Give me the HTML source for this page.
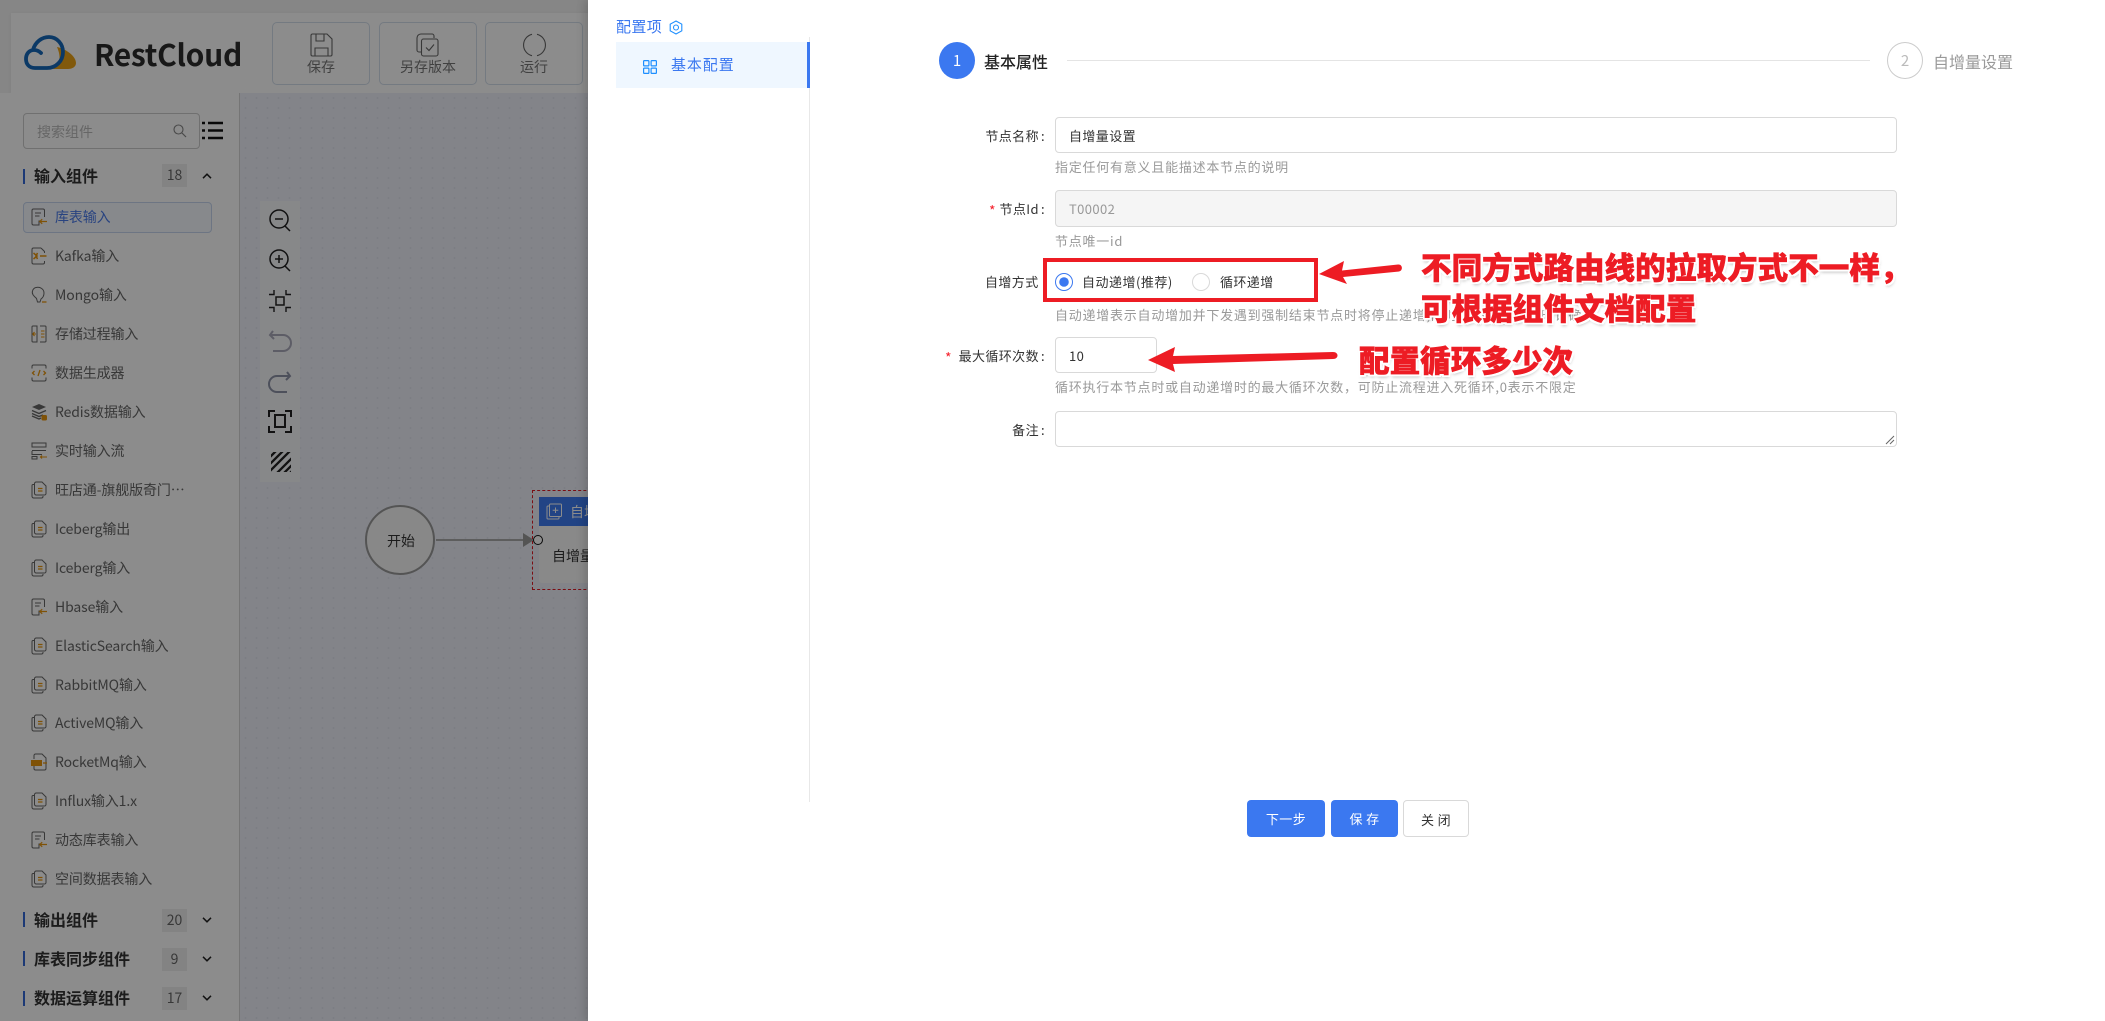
<!DOCTYPE html>
<html lang="zh-CN">
<head>
<meta charset="utf-8">
<title>RestCloud</title>
<style>
html,body{margin:0;padding:0;width:2105px;height:1021px;overflow:hidden;background:#f4f4f4;font-family:"Noto Sans CJK SC","Liberation Sans",sans-serif;}
.a{position:absolute;white-space:nowrap;}
svg{position:absolute;overflow:visible;}
#hdr{left:11px;top:13px;width:640px;height:80px;background:#fff;box-shadow:0 1px 4px rgba(0,0,0,.06);}
.hb{position:absolute;top:22px;height:61px;border:1px solid #d3deec;border-radius:5px;background:#fff;box-sizing:content-box;}
.hbt{position:absolute;left:0;right:0;top:34px;text-align:center;font-size:14px;line-height:20px;color:#777;}
#side{left:0;top:93px;width:239px;height:928px;background:#fff;border-right:1px solid #d5d5d5;}
#canvas{left:240px;top:93px;width:348px;height:928px;background-color:#eef1f9;background-image:radial-gradient(circle,#e2e5ee .8px,transparent 1px);background-size:11px 10px;}
#search{left:23px;top:113px;width:175px;height:34px;border:1px solid #ccc;border-radius:4px;background:#fff;}
.g{position:absolute;left:34px;font-size:16px;line-height:22px;font-weight:700;color:#333;}
.gb{position:absolute;left:23px;width:2px;height:15px;background:#3469d8;}
.bd{position:absolute;left:162px;width:25px;height:23px;background:#efefef;color:#666;font-size:14px;line-height:23px;text-align:center;}
.it{position:absolute;left:55px;font-size:14px;line-height:20px;color:#666;letter-spacing:-.12px;}
#ov{left:0;top:0;width:588px;height:1021px;background:rgba(0,0,0,.45);}
#dr{left:588px;top:0;width:1517px;height:1021px;background:#fff;box-shadow:-4px 0 8px rgba(0,0,0,.14);}
.lb{position:absolute;font-size:13px;line-height:20px;color:#333;letter-spacing:.4px;white-space:nowrap;}
.lr{right:1060px;text-align:right;}
.lr span{margin-left:2px;}
.hp{position:absolute;left:1055px;font-size:13px;line-height:20px;color:#999;letter-spacing:.76px;white-space:nowrap;}
.in{position:absolute;left:1055px;box-sizing:border-box;border:1px solid #d9d9d9;border-radius:4px;background:#fff;font-size:13px;line-height:36px;padding-left:13px;color:#333;letter-spacing:.4px;}
.st{position:absolute;color:#f5222d;font-size:14px;line-height:20px;}
.btn{position:absolute;top:800px;height:37px;border-radius:4px;box-sizing:border-box;font-size:13px;line-height:37px;text-align:center;letter-spacing:.4px;}
.red{position:absolute;font-size:30.6px;line-height:40px;font-weight:900;color:#ed1c24;white-space:nowrap;-webkit-text-stroke:.6px #ed1c24;text-shadow:2px 0 0 #fff,-2px 0 0 #fff,0 2px 0 #fff,0 -2px 0 #fff,2px 2px 0 #fff,-2px 2px 0 #fff,2px -2px 0 #fff,-2px -2px 0 #fff,1px 3px 3px rgba(0,0,0,.25);}
</style>
</head>
<body>
<svg width="0" height="0" style="position:absolute">
<defs>
<symbol id="doc" viewBox="0 0 16 18"><path d="M3.500 3.500H2.200A1.200 1.200 0 0 0 1 4.700V15.300A1.700 1.700 0 0 0 2.700 17H10.500A1.500 1.500 0 0 0 12 15.500V15" fill="none" stroke="#666" stroke-width="1"/><path d="M5.200 1H11L15 5V12.500A1.500 1.500 0 0 1 13.500 14H5.200A1.700 1.700 0 0 1 3.500 12.300V2.700A1.700 1.700 0 0 1 5.200 1Z" fill="none" stroke="#666" stroke-width="1"/><path d="M7 7.500H11.500M7 10H11.500" stroke="#e8950d" stroke-width="1.200"/></symbol>
<symbol id="tin" viewBox="0 0 16 18"><path d="M10 13H8V17H2.500A1.500 1.500 0 0 1 1 15.500V2.500A1.500 1.500 0 0 1 2.500 1H12A1.500 1.500 0 0 1 13.500 2.500V9" fill="none" stroke="#666" stroke-width="1"/><path d="M4 5H10M4 8H8.500" stroke="#666" stroke-width="1"/><path d="M16 13.500H9M11.200 11.200L8.800 13.500L11.200 15.800" fill="none" stroke="#e8950d" stroke-width="1.200"/></symbol>
<clipPath id="hc"><rect x="0" y="0" width="20" height="20"/></clipPath>
</defs>
</svg>

<!-- header -->
<div class="a" id="hdr"></div>
<svg style="left:24px;top:34px" width="54" height="38" viewBox="0 0 54 38">
<path d="M33 13C42 15 52 22 52 29C52 33 48 35 44 35H29C38 29 36 20 33 13Z" fill="#eca216"/>
<path d="M9 16C11 8 18 3 25 3C33 3 39 10 39 18C39 27 32 34 23 34H11C5 34 2 30 2 25C2 20 5 16 10 16C13 16 15 17 17 19" fill="none" stroke="#1569bb" stroke-width="3.800" stroke-linecap="round"/>
</svg>
<div class="a" style="left:94px;top:31px;font-size:30px;line-height:44px;font-weight:700;color:#2c2c2c;letter-spacing:-.3px;">RestCloud</div>

<div class="hb" style="left:272px;width:96px;"><svg style="left:37px;top:10px" width="23" height="24" viewBox="0 0 23 24"><path d="M2.500 1H17L22 6V21.500A1.500 1.500 0 0 1 20.500 23H2.500A1.500 1.500 0 0 1 1 21.500V2.500A1.500 1.500 0 0 1 2.500 1Z M6 1V8H14V1 M5 23V15H18V23" fill="none" stroke="#666" stroke-width="1.100"/></svg><div class="hbt">保存</div></div>
<div class="hb" style="left:379px;width:96px;"><svg style="left:36px;top:10px" width="23" height="24" viewBox="0 0 23 24"><path d="M5 1H16A2 2 0 0 1 18 3V5M5 19H3A2 2 0 0 1 1 17V5A4 4 0 0 1 5 1" fill="none" stroke="#666" stroke-width="1.100"/><rect x="5.500" y="6" width="16.500" height="17" rx="2" fill="none" stroke="#666" stroke-width="1.100"/><path d="M10 14.500L13 17.500L18 11.500" fill="none" stroke="#666" stroke-width="1.100"/></svg><div class="hbt">另存版本</div></div>
<div class="hb" style="left:485px;width:96px;"><svg style="left:37px;top:10px" width="23" height="24" viewBox="0 0 23 24"><path d="M9 1.300A11 11 0 0 0 9 22.700M14 1.300A11 11 0 0 1 14 22.700" fill="none" stroke="#666" stroke-width="1.100"/></svg><div class="hbt">运行</div></div>

<!-- sidebar -->
<div class="a" id="side"></div>
<div class="a" id="canvas"></div>
<div class="a" id="search"><div class="a" style="left:13px;top:8px;font-size:14px;line-height:20px;color:#bbb;">搜索组件</div>
<svg style="left:149px;top:10px" width="14" height="14" viewBox="0 0 14 14"><circle cx="5.500" cy="5.500" r="4.500" fill="none" stroke="#888" stroke-width="1.100"/><path d="M9 9L13 13" stroke="#888" stroke-width="1.200"/></svg></div>
<svg style="left:202px;top:121px" width="21" height="19" viewBox="0 0 21 19"><path d="M0 2H3M6 2H21M0 9.500H3M6 9.500H21M0 17H3M6 17H21" stroke="#111" stroke-width="2.400"/></svg>

<div class="gb" style="top:169px"></div><div class="g" style="top:164px">输入组件</div><div class="bd" style="top:164px;height:23px;">18</div>
<svg style="left:202px;top:173px" width="10" height="6" viewBox="0 0 10 6"><path d="M1 5.200L5 1.200L9 5.200" fill="none" stroke="#222" stroke-width="1.500"/></svg>

<div class="a" style="left:23px;top:202px;width:187px;height:29px;border:1px solid #c6d6ee;border-radius:4px;background:#f6f9ff;"></div>
<svg style="left:31px;top:208px" width="16" height="18"><use href="#tin"/></svg><div class="it" style="top:207px;color:#4a7bea;">库表输入</div>
<svg style="left:31px;top:247px" width="16" height="18" viewBox="0 0 16 18"><path d="M10 1H2.500A1.500 1.500 0 0 0 1 2.500V15.500A1.500 1.500 0 0 0 2.500 17H12A1.500 1.500 0 0 0 13.500 15.500V14M10 1L13.500 4.500V6" fill="none" stroke="#666"/><path d="M2.500 6L6 9L2.500 12M6.500 6L5 9L6.500 12M9 9H15.500" fill="none" stroke="#e8950d" stroke-width="1.500"/></svg><div class="it" style="top:246px;">Kafka输入</div>
<svg style="left:31px;top:286px" width="16" height="18" viewBox="0 0 16 18"><path d="M5 1.500C9 .5 13 3 13 7C13 10 11.500 12 10 13L9 16H6.500L5.500 12.500C3 10 .5 8 1.500 5C2 3 3 2 5 1.500Z" fill="none" stroke="#666"/><path d="M11 16H15.500" stroke="#e8950d" stroke-width="1.300"/></svg><div class="it" style="top:285px;">Mongo输入</div>
<svg style="left:31px;top:325px" width="16" height="18" viewBox="0 0 16 18"><path d="M2 1H6V17H2A1 1 0 0 1 1 16V2A1 1 0 0 1 2 1ZM9 1H14A1 1 0 0 1 15 2V16A1 1 0 0 1 14 17H9" fill="none" stroke="#666"/><path d="M2 9H5M3.500 7L1.800 9L3.500 11M10 6H13.500M10 9H13.500M10 12H13.500" fill="none" stroke="#e8950d" stroke-width="1.100"/></svg><div class="it" style="top:324px;">存储过程输入</div>
<svg style="left:31px;top:364px" width="16" height="18" viewBox="0 0 16 18"><path d="M1 4.500V2.500A1.500 1.500 0 0 1 2.500 1H13.500A1.500 1.500 0 0 1 15 2.500V4.500M1 13.500V15.500A1.500 1.500 0 0 0 2.500 17H13.500A1.500 1.500 0 0 0 15 15.500V13.500" fill="none" stroke="#666"/><path d="M3.500 7L1.500 9L3.500 11M12.500 7L14.500 9L12.500 11M9 6L7 12" fill="none" stroke="#e8950d" stroke-width="1.300"/></svg><div class="it" style="top:363px;">数据生成器</div>
<svg style="left:31px;top:403px" width="16" height="18" viewBox="0 0 16 18"><path d="M8 1L15 4L8 7L1 4Z" fill="#666"/><path d="M1 7.500L8 10.500L15 7.500M1 10.500L8 13.500L12 12M1 13L8 16L10 15" fill="none" stroke="#666" stroke-width="1.300"/><rect x="10.500" y="12" width="5.500" height="5.500" rx="1.500" fill="#e8950d"/></svg><div class="it" style="top:402px;">Redis数据输入</div>
<svg style="left:31px;top:442px" width="16" height="18" viewBox="0 0 16 18"><path d="M1 1H15V5H1ZM1 8.500H15M1 9V12.500H11M1 14.500H6V17H1Z" fill="none" stroke="#666"/><path d="M16 15H9.500M11 13.500L9.500 15L11 16.500" fill="none" stroke="#e8950d" stroke-width="1.100"/></svg><div class="it" style="top:441px;">实时输入流</div>
<svg style="left:31px;top:481px" width="16" height="18"><use href="#doc"/></svg><div class="it" style="top:480px;">旺店通-旗舰版奇门…</div>
<svg style="left:31px;top:520px" width="16" height="18"><use href="#doc"/></svg><div class="it" style="top:519px;">Iceberg输出</div>
<svg style="left:31px;top:559px" width="16" height="18"><use href="#doc"/></svg><div class="it" style="top:558px;">Iceberg输入</div>
<svg style="left:31px;top:598px" width="16" height="18"><use href="#tin"/></svg><div class="it" style="top:597px;">Hbase输入</div>
<svg style="left:31px;top:637px" width="16" height="18"><use href="#doc"/></svg><div class="it" style="top:636px;">ElasticSearch输入</div>
<svg style="left:31px;top:676px" width="16" height="18"><use href="#doc"/></svg><div class="it" style="top:675px;">RabbitMQ输入</div>
<svg style="left:31px;top:714px" width="16" height="18"><use href="#doc"/></svg><div class="it" style="top:713px;">ActiveMQ输入</div>
<svg style="left:31px;top:753px" width="16" height="18" viewBox="0 0 16 18"><path d="M3 6V2.500A1.500 1.500 0 0 1 4.500 1H11L15 5V15.500A1.500 1.500 0 0 1 13.500 17H4.500A1.500 1.500 0 0 1 3 15.500V13" fill="none" stroke="#666"/><rect x="0" y="7" width="11" height="6" fill="#e8950d"/><path d="M12 10H16" stroke="#e8950d" stroke-width="1.300"/></svg><div class="it" style="top:752px;">RocketMq输入</div>
<svg style="left:31px;top:792px" width="16" height="18"><use href="#doc"/></svg><div class="it" style="top:791px;">Influx输入1.x</div>
<svg style="left:31px;top:831px" width="16" height="18"><use href="#tin"/></svg><div class="it" style="top:830px;">动态库表输入</div>
<svg style="left:31px;top:870px" width="16" height="18"><use href="#doc"/></svg><div class="it" style="top:869px;">空间数据表输入</div>

<div class="gb" style="top:912px"></div><div class="g" style="top:908px">输出组件</div><div class="bd" style="top:909px">20</div>
<svg style="left:202px;top:917px" width="10" height="6" viewBox="0 0 10 6"><path d="M1 .8L5 4.800L9 .8" fill="none" stroke="#222" stroke-width="1.500"/></svg>
<div class="gb" style="top:951px"></div><div class="g" style="top:947px">库表同步组件</div><div class="bd" style="top:948px">9</div>
<svg style="left:202px;top:956px" width="10" height="6" viewBox="0 0 10 6"><path d="M1 .8L5 4.800L9 .8" fill="none" stroke="#222" stroke-width="1.500"/></svg>
<div class="gb" style="top:991px"></div><div class="g" style="top:986px">数据运算组件</div><div class="bd" style="top:987px">17</div>
<svg style="left:202px;top:995px" width="10" height="6" viewBox="0 0 10 6"><path d="M1 .8L5 4.800L9 .8" fill="none" stroke="#222" stroke-width="1.500"/></svg>

<!-- toolbar -->
<div class="a" style="left:260px;top:201px;width:40px;height:281px;background:#f6f7fa;"></div>
<svg style="left:269px;top:209px" width="22" height="264" viewBox="0 0 22 264" fill="none" stroke="#222" stroke-width="1.500">
<circle cx="10" cy="10" r="9"/><path d="M6 10H14M16 17L21 22"/>
<circle cx="10" cy="50" r="9"/><path d="M6 50H14M10 46V54M16 57L21 62"/>
<rect x="7" y="88" width="8" height="8"/><path d="M5 81V85.500H0M17 81V85.500H22M5 103V98.500H0M17 103V98.500H22" stroke-width="1.400"/>
<path d="M4 122L1 126L5 130M2 126H14A6 6 0 0 1 14 142H4" stroke="#aab" stroke-width="2"/>
<path d="M18 163L21 167L17 171M20 167H8A6 6 0 0 0 8 183H18" stroke="#8d93a6" stroke-width="2"/>
<rect x="6" y="206" width="10" height="12" stroke-width="2"/><path d="M6 202H0V208M16 202H22V208M6 223H0V217M16 223H22V217" stroke-width="2"/>
</svg>
<svg style="left:271px;top:452px" width="20" height="20" viewBox="0 0 20 20"><g clip-path="url(#hc)" stroke="#222" stroke-width="2.300" fill="none"><path d="M-2 6L6 -2M-2 13L13 -2M-2 20L20 -2M5 22L22 5M12 22L22 12M18 22L22 18"/></g></svg>

<!-- flow -->
<div class="a" style="left:365px;top:505px;width:66px;height:66px;border:2.500px solid #999;border-radius:50%;background:#f7f7f7;"></div>
<div class="a" style="left:366px;top:531px;width:70px;text-align:center;font-size:14px;line-height:20px;color:#333;">开始</div>
<div class="a" style="left:436px;top:539px;width:90px;height:2px;background:#aaa;"></div>
<svg style="left:523px;top:533px" width="11" height="14"><path d="M0 0L11 7L0 14Z" fill="#999"/></svg>
<div class="a" style="left:532px;top:490px;width:80px;height:100px;border:1.500px dashed #e01b24;box-sizing:border-box;"></div>
<div class="a" style="left:539px;top:497px;width:60px;height:86px;background:#fafafa;border-radius:3px;"></div>
<div class="a" style="left:539px;top:497px;width:60px;height:29px;background:#3f7df2;"></div>
<svg style="left:546px;top:503px" width="16" height="17" viewBox="0 0 16 17"><path d="M3 3H2A1 1 0 0 0 1 4V15A1 1 0 0 0 2 16H12A1 1 0 0 0 13 15V14" fill="none" stroke="#fff"/><rect x="3.500" y="1" width="12" height="12.500" rx="1" fill="none" stroke="#fff"/><path d="M9.500 4.500V10M6.700 7.300H12.300" stroke="#fff"/></svg>
<div class="a" style="left:570px;top:502px;font-size:14px;line-height:20px;color:#fff;">自增量</div>
<div class="a" style="left:552px;top:546px;font-size:14px;line-height:20px;color:#333;">自增量设置</div>
<div class="a" style="left:533px;top:535px;width:8px;height:8px;border:1.500px solid #111;border-radius:50%;background:#fff;"></div>

<!-- overlay -->
<div class="a" id="ov"></div>

<!-- drawer -->
<div class="a" id="dr"></div>
<div class="a" style="left:616px;top:17px;font-size:15px;line-height:20px;color:#3b78f0;letter-spacing:.4px;">配置项</div>
<svg style="left:669px;top:20px" width="14" height="15" viewBox="0 0 14 15"><path d="M7 1L12.800 4.200V10.800L7 14L1.200 10.800V4.200Z" fill="none" stroke="#1e8fff" stroke-width="1.100"/><circle cx="7" cy="7.500" r="2.500" fill="none" stroke="#1e8fff" stroke-width="1.100"/></svg>
<div class="a" style="left:809px;top:37px;width:1px;height:765px;background:#e8e8e8;"></div>
<div class="a" style="left:616px;top:42px;width:194px;height:46px;background:#eff7ff;"></div>
<div class="a" style="left:807px;top:42px;width:3px;height:46px;background:#3b78f0;"></div>
<svg style="left:643px;top:60px" width="14" height="14" viewBox="0 0 14 14" fill="none" stroke="#1e8fff" stroke-width="1.200"><rect x=".6" y=".6" width="5.300" height="5.300" rx=".8"/><rect x="8.100" y=".6" width="5.300" height="5.300" rx=".8"/><rect x=".6" y="8.100" width="5.300" height="5.300" rx=".8"/><rect x="8.100" y="8.100" width="5.300" height="5.300" rx=".8"/></svg>
<div class="a" style="left:671px;top:55px;font-size:15px;line-height:20px;color:#3b78f0;letter-spacing:.9px;">基本配置</div>

<!-- steps -->
<div class="a" style="left:939px;top:42px;width:36px;height:37px;border-radius:50%;background:#3b78f0;color:#fff;font-size:15px;line-height:37px;text-align:center;">1</div>
<div class="a" style="left:984px;top:50px;font-size:16px;line-height:22px;font-weight:500;color:#222;">基本属性</div>
<div class="a" style="left:1067px;top:60px;width:803px;height:1px;background:#e4e4e4;"></div>
<div class="a" style="left:1887px;top:42px;width:34px;height:35px;border:1px solid #ccc;border-radius:50%;color:#bbb;font-size:15px;line-height:35px;text-align:center;">2</div>
<div class="a" style="left:1933px;top:50px;font-size:16px;line-height:22px;color:#999;">自增量设置</div>

<!-- form -->
<div class="lb lr" style="top:126px;">节点名称<span>:</span></div>
<div class="in" style="top:117px;width:842px;height:36px;">自增量设置</div>
<div class="hp" style="top:157px;">指定任何有意义且能描述本节点的说明</div>

<div class="st" style="left:989px;top:201px;">*</div>
<div class="lb lr" style="top:199px;">节点Id<span>:</span></div>
<div class="in" style="top:190px;width:842px;height:37px;background:#f5f5f5;color:#999;">T00002</div>
<div class="hp" style="top:231px;">节点唯一id</div>

<div class="lb" style="left:985px;top:272px;">自增方式</div>
<svg style="left:1055px;top:273px" width="18" height="18"><circle cx="9" cy="9" r="8.500" fill="#fff" stroke="#3b78f0"/><circle cx="9" cy="9" r="4.800" fill="#3b78f0"/></svg>
<div class="lb" style="left:1082px;top:272px;letter-spacing:.5px;">自动递增(推荐)</div>
<svg style="left:1192px;top:273px" width="18" height="18"><circle cx="9" cy="9" r="8.500" fill="#fff" stroke="#d9d9d9"/></svg>
<div class="lb" style="left:1220px;top:272px;">循环递增</div>
<div class="hp" style="top:305px;">自动递增表示自动增加并下发遇到强制结束节点时将停止递增,同时循环递增方式时请确定</div>

<div class="st" style="left:945px;top:348px;">*</div>
<div class="lb lr" style="top:346px;">最大循环次数<span>:</span></div>
<div class="in" style="top:337px;width:102px;height:36px;">10</div>
<div class="hp" style="top:377px;">循环执行本节点时或自动递增时的最大循环次数，可防止流程进入死循环,0表示不限定</div>

<div class="lb lr" style="top:420px;">备注<span>:</span></div>
<div class="in" style="top:411px;width:842px;height:36px;"></div>
<svg style="left:1885px;top:435px" width="10" height="10"><path d="M1 9L9 1M5 9L9 5" stroke="#666" stroke-width="1"/></svg>

<div class="btn" style="left:1247px;width:78px;background:#3b78f0;color:#fff;">下一步</div>
<div class="btn" style="left:1331px;width:67px;background:#3b78f0;color:#fff;">保 存</div>
<div class="btn" style="left:1403px;width:66px;background:#fff;border:1px solid #d9d9d9;color:#333;">关 闭</div>

<!-- annotations -->
<div class="a" style="left:1043px;top:258px;width:275px;height:44px;box-sizing:border-box;border:4px solid #ed1c24;"></div>
<svg style="left:0;top:0" width="2105" height="1021">
<path d="M1319 274L1344 261L1342 270.500L1398 264.500C1403 264 1403 271 1399 271.500L1343 277L1347 284Z" fill="#ed1c24"/>
<path d="M1148 360L1175 347L1173 356L1333 352C1339 352 1339 359 1333 359L1173 364L1175 372Z" fill="#ed1c24"/>
</svg>
<div class="red" style="left:1421px;top:246px;">不同方式路由线的拉取方式不一样，</div>
<div class="red" style="left:1421px;top:287px;">可根据组件文档配置</div>
<div class="red" style="left:1359px;top:339px;">配置循环多少次</div>
</body>
</html>
